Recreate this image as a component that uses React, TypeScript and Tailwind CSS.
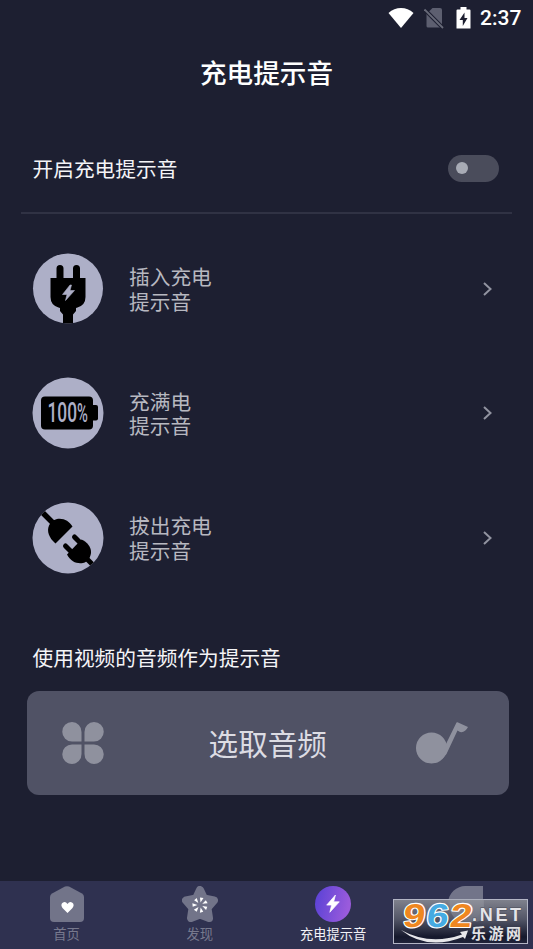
import type { ReactNode } from "react";

const BOLT = "M13.5 0 L1 14 H8 L5.5 24 L19 9.5 H11 Z";

function StatusBar() {
  return (
    <div className="flex h-9 items-center justify-end pr-3 text-white">
      <svg className="mr-[10px] h-[21px] w-[26px]" viewBox="0 0 26 21" fill="currentColor">
        <path d="M13 20 L0.500 5 Q6 0 13 0 Q20 0 25.500 5 Z" />
      </svg>
      <svg className="mr-[12px] h-[22px] w-[20px]" viewBox="0 0 20 22" fill="none">
        <path d="M8.500 1 H16 Q18 1 18 3 V20.500 H4 Q2.500 20.500 2.500 19 V7 Z" fill="#5d5f70" />
        <path d="M0.500 2.500 L19 21" stroke="#1d1f31" strokeWidth="4" />
        <path d="M0.500 2.500 L19 21" stroke="#686a79" strokeWidth="1.8" />
      </svg>
      <svg className="mr-[9px] h-[22px] w-[15px]" viewBox="0 0 15 22">
        <path d="M4.500 0 H10.500 V2.500 H13.500 Q14.500 2.500 14.500 3.500 V21.500 H0.500 V3.500 Q0.500 2.500 1.500 2.500 H4.500 Z" fill="#fff" />
        <path d="M8.500 5.500 L3.500 13 H6.800 V19 L11.500 11 H8.500 Z" fill="#1d1f31" />
      </svg>
      <span className="w-[41px] whitespace-nowrap pt-px font-[Roboto] text-[21px] font-medium leading-none">2:37</span>
    </div>
  );
}

function PlugIcon() {
  return (
    <svg className="size-[72px]" viewBox="0 0 72 72">
      <clipPath id="plug-disc"><circle cx="36" cy="35.500" r="35" /></clipPath>
      <circle cx="36" cy="35.500" r="35" fill="#adafc7" />
      <g clipPath="url(#plug-disc)">
        <path d="M28 15.500 V28 M44.500 15.500 V28" stroke="#000" strokeWidth="7" strokeLinecap="round" />
        <path d="M18.500 25 H53.500 V44 Q53.500 52 45.500 54.500 L44 55 V58 L41 61.500 V72 H31 V61.500 L28 58 V55 L26.500 54.500 Q18.500 52 18.500 44 Z" />
      </g>
      <path d="M38 32 L30.500 41.500 H35 L33.500 47.500 L42.500 37.500 H38 L39.500 32 Z" fill="#adafc7" stroke="#adafc7" strokeWidth=".6" />
    </svg>
  );
}

function FullIcon() {
  return (
    <svg className="size-[72px]" viewBox="0 0 72 72">
      <circle cx="36" cy="36" r="35.500" fill="#adafc7" />
      <rect x="9" y="19.500" width="52" height="33" rx="4" />
      <rect x="59" y="28" width="7" height="15.500" rx="2" />
      <text transform="translate(15.500 45) scale(.64 1)" fill="#adafc7" fontFamily="Roboto, sans-serif" fontWeight="500" fontSize="27">
        100<tspan fontSize="26" textLength="17" lengthAdjust="spacingAndGlyphs">%</tspan>
      </text>
    </svg>
  );
}

function UnplugIcon() {
  return (
    <svg className="size-[72px]" viewBox="0 0 72 72">
      <clipPath id="unplug-disc"><circle cx="36" cy="36" r="35.500" /></clipPath>
      <circle cx="36" cy="36" r="35.500" fill="#adafc7" />
      <g clipPath="url(#unplug-disc)">
        <path d="M8 8 L22 22" stroke="#000" strokeWidth="5.500" />
        <path d="M40.500 24.500 L23.500 41.500 C17 36 14.500 29 17 23.500 C18.500 20 21 18 25 17 C32 16 37 19 40.500 24.500 Z" />
        <path d="M42.500 35 L50 42.500 M33.500 44 L41 51.500" stroke="#000" strokeWidth="5" strokeLinecap="round" />
        <path d="M49.500 37.500 L35 52.500 C39 60 45 62 51 61 C56 60 58.500 55 59 51 C59.500 45 55 40 49.500 37.500 Z" />
        <path d="M55 57 L65 67" stroke="#000" strokeWidth="5" />
      </g>
    </svg>
  );
}

function SoundRow({ icon, label }: { icon: ReactNode; label: string }) {
  return (
    <div className="flex h-[124.5px] items-center pl-8 pr-[41px]">
      {icon}
      <p className="ml-[25px] flex-1 whitespace-pre-line text-[20.7px] leading-[24.5px] text-[#b7b8c0]">
        {`${label}\n提示音`}
      </p>
      <svg className="h-[14px] w-[9px]" viewBox="0 0 9 14" fill="none">
        <path d="M1 1 L7.500 7 L1 13" stroke="#9193a0" strokeWidth="2" />
      </svg>
    </div>
  );
}

function Tab({ icon, label, active = false }: { icon: ReactNode; label: string; active?: boolean }) {
  return (
    <div className={`flex flex-1 flex-col items-center pt-[5px] ${active ? "text-[#f2f2f7]" : "text-[#77798e]"}`}>
      {icon}
      <span className="mt-[2px] whitespace-nowrap text-[13.300px] leading-[20px]">{label}</span>
    </div>
  );
}

function Watermark() {
  return (
    <svg className="absolute left-[393px] top-[18px] h-[45px] w-[135px] overflow-visible" viewBox="0 0 135 45">
      <defs>
        <linearGradient id="mark-bg" x1="0" y1="0" x2="0" y2="1">
          <stop offset="0" stopColor="#858791" />
          <stop offset="0.450" stopColor="#555868" />
          <stop offset="0.850" stopColor="#14172a" />
          <stop offset="1" stopColor="#20243a" />
        </linearGradient>
      </defs>
      <rect x="0.500" y="0.500" width="134" height="44" fill="url(#mark-bg)" fillOpacity=".94" stroke="#b3b5c5" />
      <path d="M57 0 H91 V18 Q88 23 80 23 H66 Q55 16 57 0 Z" fill="#a0a2ab" opacity=".35" />
      <text
        transform="translate(9 27.500) skewX(-7) scale(1.2 1)"
        fontFamily="'Liberation Sans', sans-serif"
        fontWeight="700"
        fontSize="33"
        letterSpacing="1.200"
        stroke="#fff"
        strokeWidth="2.200"
        strokeLinejoin="round"
        style={{ paintOrder: "stroke" }}
      >
        <tspan fill="#ef8720">9</tspan>
        <tspan fill="#45aae2">6</tspan>
        <tspan fill="#ef8720">2</tspan>
      </text>
      <path d="M8 31 Q37 47 69 35.500 L67 33 L75 31.500 L72 40 L70 38 Q34 52 8 31 Z" fill="#e7e7ea" />
      <text x="79" y="22" fill="#e4e4e8" stroke="#4b4d58" strokeWidth="1" style={{ paintOrder: "stroke" }} fontFamily="'Liberation Sans', sans-serif" fontWeight="700" fontSize="18" letterSpacing="2.700">.NET</text>
      <text x="78" y="40" fill="#e1e1e5" fontFamily="'Noto Sans CJK SC', sans-serif" fontWeight="700" fontSize="15" textLength="50" lengthAdjust="spacing">乐游网</text>
    </svg>
  );
}

export default function App() {
  return (
    <div className="flex h-[949px] w-[533px] flex-col overflow-hidden bg-[#1d1f31] font-['Noto_Sans_CJK_SC',sans-serif]">
      <StatusBar />
      <h1 className="flex h-[73px] items-center justify-center text-[26.600px] font-medium leading-none text-white">充电提示音</h1>

      <div className="mt-[15px] flex h-[88px] items-center justify-between pl-[32.500px] pr-[34px]">
        <span className="text-[20.7px] leading-none text-[#f4f4f7]">开启充电提示音</span>
        <div className="flex h-[27px] w-[51px] items-center rounded-full bg-[#4a4c5b] pl-[8px]">
          <div className="size-3 rounded-full bg-[#a8abb5]" />
        </div>
      </div>
      <div className="ml-[21px] mr-[21px] h-[2px] shrink-0 bg-[#303244]" />

      <div className="mt-[12.500px]">
        <SoundRow icon={<PlugIcon />} label="插入充电" />
        <SoundRow icon={<FullIcon />} label="充满电" />
        <SoundRow icon={<UnplugIcon />} label="拔出充电" />
      </div>

      <h2 className="mt-[42px] pl-[32.500px] text-[20.7px] leading-[30px] text-[#f4f4f7]">使用视频的音频作为提示音</h2>
      <div className="ml-[26.500px] mr-6 mt-[19px] grid h-[104px] shrink-0 grid-cols-[1fr_auto_1fr] items-center rounded-[12px] bg-[#505265] pl-[35px] pr-[41px]">
        <svg className="size-[42px]" viewBox="0 0 42 42" fill="#8f919e">
          <path d="M10 0 A9.700 9.700 0 0 1 19.500 10 V19.500 H10 A9.750 9.750 0 0 1 10 0 Z" />
          <path d="M32 0 A9.700 9.700 0 0 0 22.500 10 V19.500 H32 A9.750 9.750 0 0 0 32 0 Z" />
          <path d="M10 42 A9.700 9.700 0 0 0 19.500 32 V22.500 H10 A9.750 9.750 0 0 0 10 42 Z" />
          <path d="M32 42 A9.700 9.700 0 0 1 22.500 32 V22.500 H32 A9.750 9.750 0 0 1 32 42 Z" />
        </svg>
        <span className="pl-[6px] text-[29.600px] leading-none text-[#dcdce3]">选取音频</span>
        <svg className="h-[42px] w-[52px] justify-self-end" viewBox="0 0 52 42" fill="#8f919e">
          <circle cx="15.500" cy="26" r="15.500" />
          <path d="M30 22 L40.500 0.500 Q41 0 41.500 0.200 L52 5 Q49 11 44 10 L41.500 8.500 L30.500 32 L26 37 Z" />
        </svg>
      </div>

      <div className="relative mt-auto flex h-[68px] shrink-0 bg-[#2f3150]">
        <Tab
          label="首页"
          icon={
            <svg className="size-9" viewBox="0 0 36 36">
              <path d="M16 .6 Q18 -.3 20 .6 L33 7.500 Q35 8.600 35 11 V32 Q35 36 31 36 H5 Q1 36 1 32 V11 Q1 8.600 3 7.500 Z" fill="#727489" />
              <path d="M18.500 27 L13.500 22 Q11 18.500 14 16.500 Q16.500 15 18.500 18 Q20.500 15 23 16.500 Q26 18.500 23.500 22 Z" fill="#fff" />
            </svg>
          }
        />
        <Tab
          label="发现"
          icon={
            <svg className="size-9" viewBox="0 0 36 36">
              <path d="M18 4 L22 12.500 L32 14.500 L25.500 22 L27 32 L18 28.500 L9 32 L10.500 22 L4 14.500 L14 12.500 Z" fill="#727489" stroke="#727489" strokeWidth="8" strokeLinejoin="round" />
              {[0, 51.4, 102.8, 154.2, 205.6, 257, 308.4].map((angle) => (
                <path key={angle} d="M18.500 16.500 L18 11.500 L21.500 12 Z" fill="#fff" transform={`rotate(${angle} 18 19)`} />
              ))}
            </svg>
          }
        />
        <Tab
          active
          label="充电提示音"
          icon={
            <svg className="size-9" viewBox="0 0 36 36">
              <linearGradient id="active-tab" x1="0" y1="0" x2="1" y2=".2">
                <stop stopColor="#5841d5" />
                <stop offset="1" stopColor="#9a5bdc" />
              </linearGradient>
              <circle cx="18" cy="18" r="18" fill="url(#active-tab)" />
              <path d={BOLT} transform="translate(11 9) scale(.7 .72)" fill="#fff" stroke="#fff" strokeLinejoin="round" />
            </svg>
          }
        />
        <Tab
          label="我的"
          icon={
            <svg className="size-9" viewBox="0 0 36 36">
              <path d="M18 0 H35 V18 A17.500 17.500 0 1 1 18 0 Z" fill="#727489" />
            </svg>
          }
        />
        <Watermark />
      </div>
    </div>
  );
}
